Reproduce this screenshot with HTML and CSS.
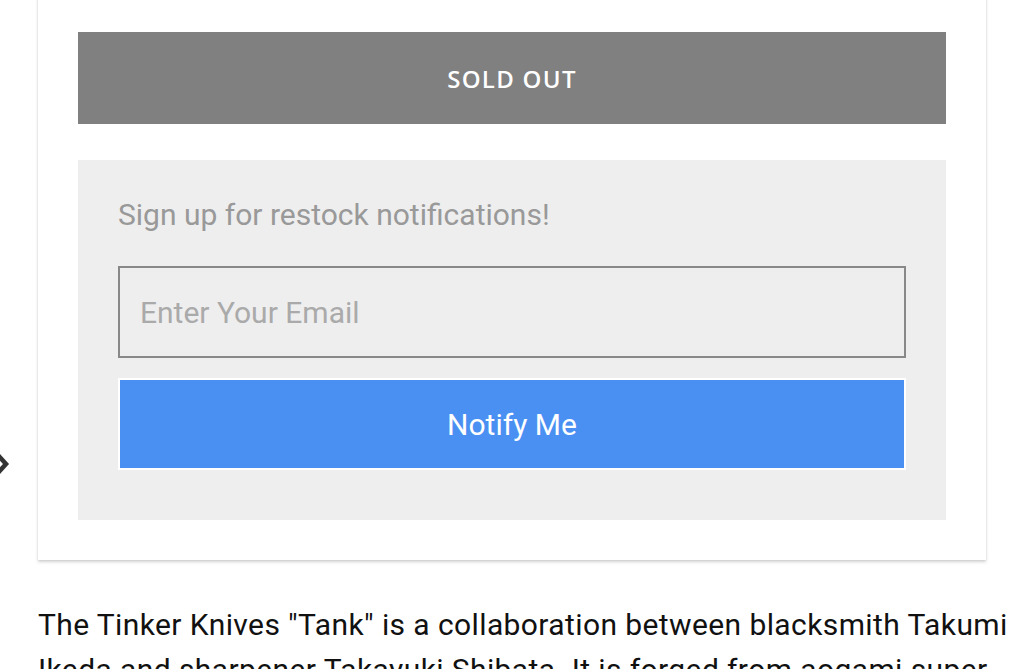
FILE: index.html
```html
<!DOCTYPE html>
<html>
<head>
<meta charset="utf-8">
<link rel="stylesheet" href="styles.css">
</head>
<body>
<div class="page">
  <svg class="nav-arrow" width="24" height="30" viewBox="0 0 24 30"><path d="M6 4 L16 15 L6 26" fill="none" stroke="#333" stroke-width="4.5" stroke-linejoin="miter"/></svg>
  <div class="card">
    <div class="sold-out">SOLD OUT</div>
    <div class="restock">
      <p class="restock-title">Sign up for restock notifications!</p>
      <input class="email" type="text" placeholder="Enter Your Email">
      <button class="notify">Notify Me</button>
    </div>
  </div>
  <p class="desc">The Tinker Knives "Tank" is a collaboration between blacksmith Takumi Ikeda and sharpener Takayuki Shibata. It is forged from aogami super steel.</p>
</div>
</body>
</html>
```
FILE: styles.css
```css
html, body {
  margin: 0;
  padding: 0;
  background: #fff;
  overflow: hidden;
}
body {
  font-family: Roboto, "Liberation Sans", sans-serif;
}
.page {
  position: relative;
  padding-left: 38px;
  width: 980px;
}
.nav-arrow {
  position: absolute;
  left: -10px;
  top: 469px;
}
.card {
  width: 868px;
  margin-top: -20px;
  padding: 52px 40px 40px;
  background: #fff;
  box-shadow: 0 2px 3px rgba(0,0,0,0.18), 0 0 1px rgba(0,0,0,0.12);
  display: flex;
  flex-direction: column;
  gap: 36px;
}
.sold-out {
  height: 92px;
  background: #808080;
  color: #fff;
  font-family: "Open Sans", sans-serif;
  font-weight: 600;
  font-size: 24px;
  letter-spacing: 1.3px;
  display: flex;
  align-items: center;
  justify-content: center;
}
.restock {
  background: #eeeeee;
  padding: 37px 40px 50px;
  display: flex;
  flex-direction: column;
}
.restock-title {
  margin: 0 0 33px;
  font-size: 30px;
  line-height: 36px;
  color: #999;
}
.email {
  box-sizing: border-box;
  height: 92px;
  border: 2px solid #888;
  background: transparent;
  padding: 0 20px;
  font-family: Roboto, sans-serif;
  font-size: 30px;
  color: #333;
  outline: none;
  margin: 0 0 20px;
}
.email::placeholder {
  color: #aaa;
}
.notify {
  box-sizing: border-box;
  height: 92px;
  border: 2px solid #fff;
  background: #4a90f2;
  color: #fff;
  font-family: Roboto, sans-serif;
  font-size: 30px;
  padding: 0;
}
.desc {
  margin: 42px 0 0;
  width: 980px;
  font-size: 30px;
  letter-spacing: 0.4px;
  line-height: 45px;
  color: #111;
}
```
